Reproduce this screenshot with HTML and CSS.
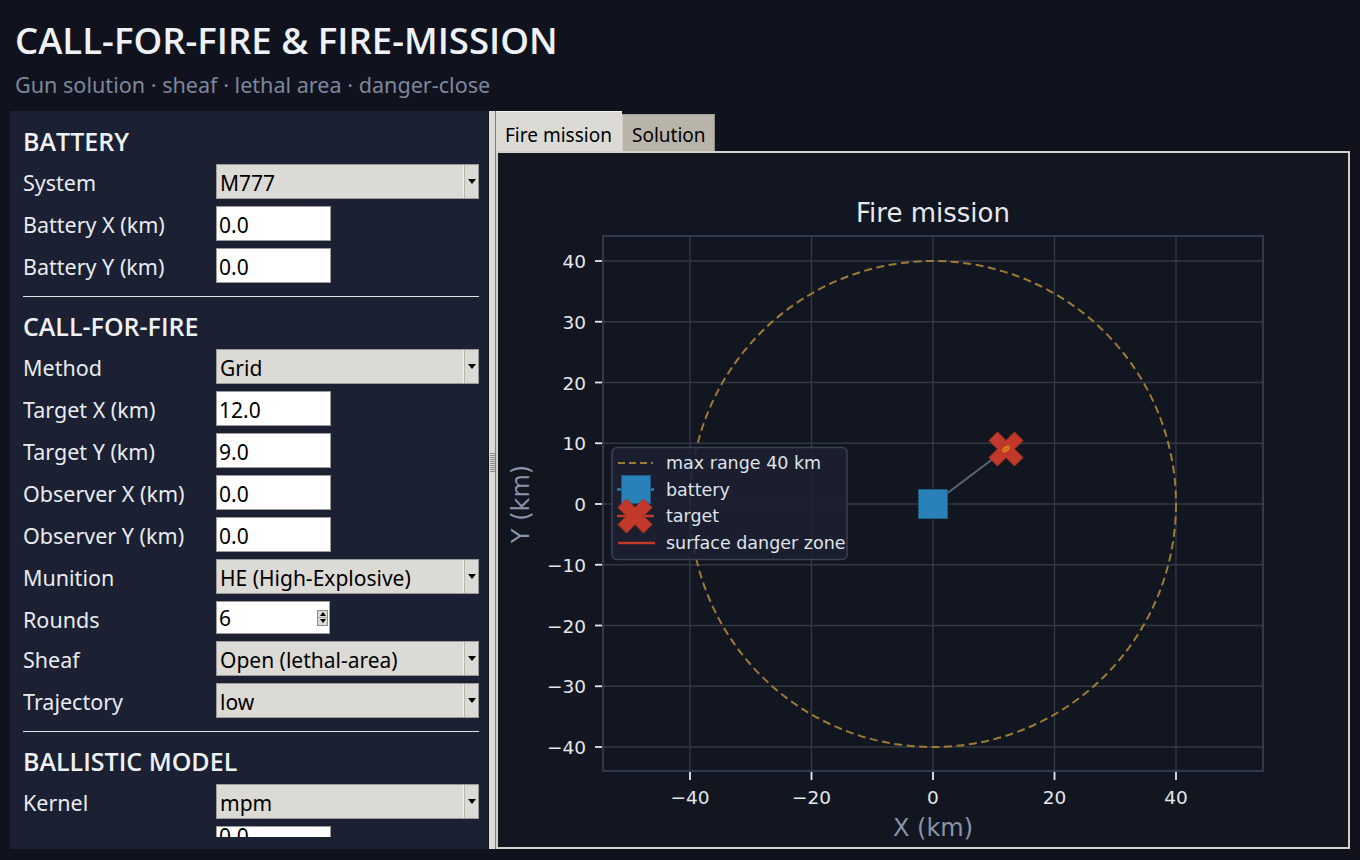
FILE: index.html
```html
<!DOCTYPE html>
<html lang="en">
<head>
<meta charset="utf-8">
<title>Call-for-fire &amp; fire-mission</title>
<link rel="stylesheet" href="styles.css">
</head>
<body>
<header class="head">
  <h1 class="title">CALL-FOR-FIRE &amp; FIRE-MISSION</h1>
  <p class="subtitle">Gun solution · sheaf · lethal area · danger-close</p>
</header>
<main class="main">
  <aside class="panel">
    <div class="scroll">
      <section class="sec">
        <h2 class="sec-title">BATTERY</h2>
        <div class="row"><span class="lbl">System</span><div class="combo"><span class="val">M777</span><span class="arrow"></span></div></div>
        <div class="row"><span class="lbl">Battery X (km)</span><div class="entry">0.0</div></div>
        <div class="row"><span class="lbl">Battery Y (km)</span><div class="entry">0.0</div></div>
      </section>
      <hr class="sep">
      <section class="sec">
        <h2 class="sec-title">CALL-FOR-FIRE</h2>
        <div class="row"><span class="lbl">Method</span><div class="combo"><span class="val">Grid</span><span class="arrow"></span></div></div>
        <div class="row"><span class="lbl">Target X (km)</span><div class="entry">12.0</div></div>
        <div class="row"><span class="lbl">Target Y (km)</span><div class="entry">9.0</div></div>
        <div class="row"><span class="lbl">Observer X (km)</span><div class="entry">0.0</div></div>
        <div class="row"><span class="lbl">Observer Y (km)</span><div class="entry">0.0</div></div>
        <div class="row"><span class="lbl">Munition</span><div class="combo"><span class="val">HE (High-Explosive)</span><span class="arrow"></span></div></div>
        <div class="row row-spin"><span class="lbl">Rounds</span><div class="entry spin"><span class="val">6</span><span class="spin-btns"><span class="sb up"></span><span class="sb down"></span></span></div></div>
        <div class="row"><span class="lbl">Sheaf</span><div class="combo"><span class="val">Open (lethal-area)</span><span class="arrow"></span></div></div>
        <div class="row"><span class="lbl">Trajectory</span><div class="combo"><span class="val">low</span><span class="arrow"></span></div></div>
      </section>
      <hr class="sep">
      <section class="sec">
        <h2 class="sec-title">BALLISTIC MODEL</h2>
        <div class="row"><span class="lbl">Kernel</span><div class="combo"><span class="val">mpm</span><span class="arrow"></span></div></div>
        <div class="row row-cut"><span class="lbl"></span><div class="entry entry-cut"><span class="cut-text">0.0</span></div></div>
      </section>
    </div>
  </aside>
  <div class="sash"><span class="grip"></span></div>
  <div class="notebook">
    <div class="tabs">
      <div class="tab active">Fire mission</div>
      <div class="tab">Solution</div>
    </div>
    <div class="frame">
      <svg class="chart" viewBox="498 153 850 694" xmlns="http://www.w3.org/2000/svg">
        <rect x="498" y="153" width="850" height="694" fill="#121620"/>
        <text x="933" y="222" class="c-title" text-anchor="middle">Fire mission</text>
        <g stroke="#343845" stroke-width="1.4">
          <line x1="690" y1="236" x2="690" y2="771"/>
          <line x1="811.5" y1="236" x2="811.5" y2="771"/>
          <line x1="933" y1="236" x2="933" y2="771"/>
          <line x1="1054.5" y1="236" x2="1054.5" y2="771"/>
          <line x1="1176" y1="236" x2="1176" y2="771"/>
          <line x1="603" y1="261" x2="1263" y2="261"/>
          <line x1="603" y1="321.75" x2="1263" y2="321.75"/>
          <line x1="603" y1="382.5" x2="1263" y2="382.5"/>
          <line x1="603" y1="443.25" x2="1263" y2="443.25"/>
          <line x1="603" y1="504" x2="1263" y2="504"/>
          <line x1="603" y1="564.75" x2="1263" y2="564.75"/>
          <line x1="603" y1="625.5" x2="1263" y2="625.5"/>
          <line x1="603" y1="686.25" x2="1263" y2="686.25"/>
          <line x1="603" y1="747" x2="1263" y2="747"/>
        </g>
        <rect x="603" y="236" width="660" height="535" fill="none" stroke="#3b4358" stroke-width="1.6"/>
        <g stroke="#e6e9ef" stroke-width="1.8">
          <line x1="595" y1="261" x2="602" y2="261"/>
          <line x1="595" y1="321.75" x2="602" y2="321.75"/>
          <line x1="595" y1="382.5" x2="602" y2="382.5"/>
          <line x1="595" y1="443.25" x2="602" y2="443.25"/>
          <line x1="595" y1="504" x2="602" y2="504"/>
          <line x1="595" y1="564.75" x2="602" y2="564.75"/>
          <line x1="595" y1="625.5" x2="602" y2="625.5"/>
          <line x1="595" y1="686.25" x2="602" y2="686.25"/>
          <line x1="595" y1="747" x2="602" y2="747"/>
          <line x1="690" y1="772" x2="690" y2="780"/>
          <line x1="811.5" y1="772" x2="811.5" y2="780"/>
          <line x1="933" y1="772" x2="933" y2="780"/>
          <line x1="1054.5" y1="772" x2="1054.5" y2="780"/>
          <line x1="1176" y1="772" x2="1176" y2="780"/>
        </g>
        <g class="c-tick" text-anchor="end">
          <text x="586" y="268">40</text>
          <text x="586" y="328.75">30</text>
          <text x="586" y="389.5">20</text>
          <text x="586" y="450.25">10</text>
          <text x="586" y="511">0</text>
          <text x="586" y="571.75">−10</text>
          <text x="586" y="632.5">−20</text>
          <text x="586" y="693.25">−30</text>
          <text x="586" y="754">−40</text>
        </g>
        <g class="c-tick" text-anchor="middle">
          <text x="690" y="804">−40</text>
          <text x="811.5" y="804">−20</text>
          <text x="933" y="804">0</text>
          <text x="1054.5" y="804">20</text>
          <text x="1176" y="804">40</text>
        </g>
        <text x="933" y="836" class="c-label" text-anchor="middle">X (km)</text>
        <text x="529" y="504" class="c-label" text-anchor="middle" transform="rotate(-90 529 504)">Y (km)</text>
        <circle cx="933" cy="504" r="243" fill="none" stroke="#9d7b37" stroke-width="2" stroke-dasharray="8 4.5"/>
        <line x1="933" y1="504" x2="1006" y2="449" stroke="#5d6577" stroke-width="2"/>
        <rect x="918.5" y="489.5" width="29" height="29" fill="#2a80b9" stroke="#1d5a85" stroke-width="1"/>
        <polygon points="997.5,432 1006,440.5 1014.5,432 1023,440.5 1014.5,449 1023,457.5 1014.5,466 1006,457.5 997.5,466 989,457.5 997.5,449 989,440.5" fill="#c0392b" stroke="#a8321f" stroke-width="1" stroke-linejoin="round"/>
        <ellipse cx="1006" cy="449" rx="4.5" ry="2.6" fill="#e67e22" transform="rotate(-37 1006 449)"/>
        <line x1="1003" y1="451" x2="1009" y2="447" stroke="#b5521a" stroke-width="1"/>
        <g>
          <rect x="612" y="447.5" width="235" height="112" rx="5" fill="#1b2030" fill-opacity="0.88" stroke="#3a4256" stroke-width="1.5"/>
          <line x1="618" y1="463" x2="653" y2="463" stroke="#9d7b37" stroke-width="2" stroke-dasharray="7 4"/>
          <line x1="617" y1="489.5" x2="654" y2="489.5" stroke="#2a80b9" stroke-width="2.5"/>
          <rect x="621.5" y="475.5" width="29" height="28" fill="#2a80b9" stroke="#1d5a85" stroke-width="1"/>
          <line x1="617" y1="516" x2="654" y2="516" stroke="#c0392b" stroke-width="2.5"/>
          <polygon points="626.5,499 635,507.5 643.5,499 652,507.5 643.5,516 652,524.5 643.5,533 635,524.5 626.5,533 618,524.5 626.5,516 618,507.5" fill="#c0392b" stroke="#a8321f" stroke-width="1" stroke-linejoin="round"/>
          <line x1="618" y1="543" x2="655" y2="543" stroke="#c0392b" stroke-width="2.5"/>
          <g class="c-leg">
            <text x="666" y="469">max range 40 km</text>
            <text x="666" y="496">battery</text>
            <text x="666" y="522">target</text>
            <text x="666" y="549">surface danger zone</text>
          </g>
        </g>
      </svg>
    </div>
  </div>
</main>
</body>
</html>
```
FILE: styles.css
```css
* { box-sizing: border-box; }

html, body {
  margin: 0;
  padding: 0;
}

body {
  width: 1360px;
  height: 860px;
  overflow: hidden;
  background: #10131d;
  color: #e8ebf0;
  font-family: "Noto Sans", "Open Sans", "DejaVu Sans", sans-serif;
}

.head {
  padding: 18px 0 0 15px;
}

.title {
  margin: 0;
  font-family: "Open Sans", "Noto Sans", sans-serif;
  font-size: 36.6px;
  line-height: 44px;
  font-weight: 600;
  color: #eef1f6;
}

.subtitle {
  margin: 9px 0 0;
  font-size: 21.6px;
  line-height: 28px;
  color: #7d879b;
}

.main {
  display: flex;
  margin: 12px 10px 0 10px;
  height: 738px;
}

/* ---------- left control panel ---------- */
.panel {
  width: 478px;
  flex: none;
  background: #1b2033;
  padding: 14px 9px 12px 13px;
  display: flex;
  flex-direction: column;
}

.scroll {
  flex: 1;
  min-height: 0;
  overflow: hidden;
}

.sec {
  display: flex;
  flex-direction: column;
  gap: 7px;
}

.sec-title {
  margin: 0;
  font-family: "Open Sans", "Noto Sans", sans-serif;
  font-size: 25px;
  line-height: 32px;
  font-weight: 600;
  color: #eef1f6;
}

.row {
  display: flex;
  align-items: flex-start;
  height: 35px;
}

.row-spin { height: 33px; }

.lbl {
  width: 193px;
  flex: none;
  font-size: 21.5px;
  line-height: 31px;
  padding-top: 3px;
  color: #e8ebf0;
  white-space: nowrap;
}

.entry,
.combo {
  height: 35px;
  font-size: 21px;
  line-height: 31px;
  color: #000;
  white-space: nowrap;
}

.entry {
  width: 115px;
  background: #ffffff;
  border: 1px solid #9c9c9c;
  padding: 3px 0 0 2px;
}

.combo {
  width: 263px;
  display: flex;
  background: #dcdad5;
  border: 1px solid #9a9a9a;
}

.combo .val {
  flex: 1;
  padding: 3px 0 0 3px;
}

.arrow {
  width: 15px;
  flex: none;
  border-left: 1px solid #f2f1ee;
  box-shadow: inset 1px 0 0 #b9b6af;
  display: flex;
  align-items: center;
  justify-content: center;
}

.arrow::after {
  content: "";
  border-left: 4px solid transparent;
  border-right: 4px solid transparent;
  border-top: 5px solid #000;
  margin-left: 1px;
}

.spin {
  width: 114px;
  height: 33px;
  display: flex;
  align-items: center;
  padding: 0 1px 0 2px;
}

.spin .val {
  flex: 1;
  line-height: 29px;
  padding-top: 2px;
}

.spin-btns {
  display: flex;
  flex-direction: column;
  width: 11px;
  height: 16px;
  border: 1px solid #8d8d8d;
  background: #dcdad5;
}

.sb {
  flex: 1;
  display: flex;
  align-items: center;
  justify-content: center;
}

.sb.up { border-bottom: 1px solid #a5a5a5; }

.sb.up::after {
  content: "";
  border-left: 3px solid transparent;
  border-right: 3px solid transparent;
  border-bottom: 4px solid #000;
}

.sb.down::after {
  content: "";
  border-left: 3px solid transparent;
  border-right: 3px solid transparent;
  border-top: 4px solid #000;
}

.entry-cut {
  height: 12px;
  overflow: hidden;
  padding: 0 0 0 2px;
}

.cut-text {
  display: block;
  line-height: 21px;
  margin-top: -1px;
}

.sep {
  margin: 13px 0 13px -3px;
  width: 459px;
  height: 1px;
  border: 0;
  background: #e4e4e4;
}

/* ---------- sash ---------- */
.sash {
  width: 8px;
  flex: none;
  background: #dcdad5;
  border-left: 1px solid #10131d;
  border-right: 1px solid #7d7d7d;
  display: flex;
  align-items: center;
  justify-content: center;
}

.grip {
  width: 5px;
  height: 20px;
  margin-top: -34px;
  background: repeating-linear-gradient(to bottom, #8c8a86 0, #8c8a86 1px, transparent 1px, transparent 2px);
}

/* ---------- notebook ---------- */
.notebook {
  flex: 1;
  display: flex;
  flex-direction: column;
}

.tabs {
  display: flex;
  align-items: flex-end;
  height: 40px;
  flex: none;
}

.tab {
  font-size: 19px;
  line-height: 26px;
  color: #000;
  white-space: nowrap;
}

.tab.active {
  width: 126px;
  height: 40px;
  padding: 10px 0 0 9px;
  background: #dcdad5;
  border-top: 1px solid #f4f3f0;
}

.tab:not(.active) {
  width: 93px;
  height: 37px;
  padding: 7px 0 0 9px;
  background: #b8b4aa;
  border-top: 1px solid #a09c93;
  border-right: 1px solid #8f8b83;
  border-left: 1px solid #d0cdc6;
}

.frame {
  flex: 1;
  border: 2px solid #d3d0c9;
  background: #121620;
  overflow: hidden;
}

.chart {
  display: block;
  width: 850px;
  height: 694px;
}

.c-title {
  font-family: "DejaVu Sans", sans-serif;
  font-size: 26px;
  fill: #e6e9ef;
}

.c-tick text {
  font-family: "DejaVu Sans", sans-serif;
  font-size: 18.5px;
  fill: #e3e6ec;
}

.c-label {
  font-family: "DejaVu Sans", sans-serif;
  font-size: 24px;
  fill: #8a93a7;
}

.c-leg text {
  font-family: "DejaVu Sans", sans-serif;
  font-size: 17.5px;
  fill: #dfe3ea;
}
```
